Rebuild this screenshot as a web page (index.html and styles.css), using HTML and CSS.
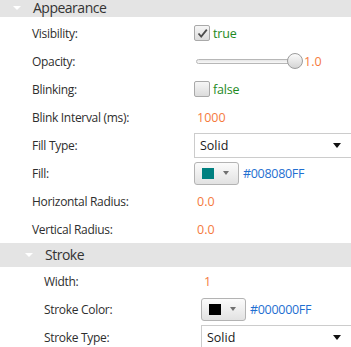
FILE: index.html
```html
<!DOCTYPE html>
<html>
<head>
<meta charset="utf-8">
<link rel="stylesheet" href="styles.css">
</head>
<body>
<div class="sheet">
  <div class="section">
    <div class="header top"><span class="tri"></span><span class="htext">Appearance</span></div>
    <div class="rows first">
      <div class="row">
        <div class="label">Visibility:</div>
        <div class="value">
          <span class="check on"><svg width="13" height="13" viewBox="0 0 13 13"><path d="M2.5 6.5 L5.2 9.6 L10.8 2.6" fill="none" stroke="#4d4d4d" stroke-width="1.8"/></svg></span>
          <span class="bool">true</span>
        </div>
      </div>
      <div class="row">
        <div class="label">Opacity:</div>
        <div class="value">
          <span class="slider"><span class="track"></span><span class="thumb"></span></span>
          <span class="num">1.0</span>
        </div>
      </div>
      <div class="row">
        <div class="label">Blinking:</div>
        <div class="value">
          <span class="check"></span>
          <span class="bool">false</span>
        </div>
      </div>
      <div class="row">
        <div class="label">Blink Interval (ms):</div>
        <div class="value"><span class="num pad">1000</span></div>
      </div>
      <div class="row">
        <div class="label">Fill Type:</div>
        <div class="value"><span class="select"><span>Solid</span><span class="darr"></span></span></div>
      </div>
      <div class="row">
        <div class="label">Fill:</div>
        <div class="value">
          <span class="colorbtn"><span class="swatch teal"></span><span class="garr"></span></span>
          <span class="hex">#008080FF</span>
        </div>
      </div>
      <div class="row">
        <div class="label">Horizontal Radius:</div>
        <div class="value"><span class="num pad">0.0</span></div>
      </div>
      <div class="row">
        <div class="label">Vertical Radius:</div>
        <div class="value"><span class="num pad">0.0</span></div>
      </div>
    </div>
  </div>
  <div class="section nested">
    <div class="header"><span class="tri"></span><span class="htext">Stroke</span></div>
    <div class="rows">
      <div class="row">
        <div class="label">Width:</div>
        <div class="value"><span class="num pad">1</span></div>
      </div>
      <div class="row">
        <div class="label">Stroke Color:</div>
        <div class="value">
          <span class="colorbtn"><span class="swatch black"></span><span class="garr"></span></span>
          <span class="hex">#000000FF</span>
        </div>
      </div>
      <div class="row">
        <div class="label">Stroke Type:</div>
        <div class="value"><span class="select"><span>Solid</span><span class="darr"></span></span></div>
      </div>
    </div>
  </div>
</div>
</body>
</html>
```

FILE: styles.css
```css
html, body {
  margin: 0;
  padding: 0;
  background: #ffffff;
  overflow: hidden;
}
body {
  font-family: "Open Sans", "Noto Sans", sans-serif;
  font-size: 12px;
  color: #2e2e2e;
}
.sheet {
  width: 351px;
}
.header {
  height: 24px;
  background: #e4e4e4;
  display: flex;
  align-items: center;
  padding-left: 13px;
}
.header.top {
  box-sizing: border-box;
  height: 17px;
  padding-bottom: 2px;
}
.nested .header {
  padding-left: 25px;
}
.tri {
  width: 0;
  height: 0;
  border-left: 4px solid transparent;
  border-right: 4px solid transparent;
  border-top: 4px solid #ffffff;
  margin-right: 12px;
}
.htext {
  font-size: 14px;
  line-height: 14px;
  letter-spacing: -0.5px;
  color: #333333;
}
.rows.first {
  padding-top: 2px;
}
.row {
  height: 28px;
  display: grid;
  grid-template-columns: 162px 1fr;
  align-items: center;
  padding-left: 32px;
}
.nested .row {
  padding-left: 44px;
  grid-template-columns: 157px 1fr;
}
.label {
  letter-spacing: -0.3px;
}
.value {
  display: flex;
  align-items: center;
  white-space: nowrap;
}
.check {
  width: 14px;
  height: 14px;
  border: 1px solid #a9a9a9;
  border-radius: 2px;
  background: linear-gradient(#f6f6f6, #dcdcdc);
  display: flex;
  align-items: center;
  justify-content: center;
  margin-right: 3px;
}
.bool {
  color: #1e8a1e;
  font-size: 12.5px;
  letter-spacing: -0.2px;
}
.slider {
  position: relative;
  width: 108px;
  height: 16px;
  display: flex;
  align-items: center;
}
.track {
  margin-left: 2px;
  width: 100px;
  height: 3px;
  border: 1px solid #b7b7b7;
  border-radius: 3px;
  background: linear-gradient(#e6e6e6, #f8f8f8);
}
.thumb {
  position: absolute;
  left: 93px;
  top: 0;
  width: 14px;
  height: 14px;
  border: 1px solid #9c9c9c;
  border-radius: 50%;
  background: linear-gradient(#fbfbfb, #d4d4d4);
}
.num {
  color: #f57a3e;
  font-size: 12.5px;
}
.slider + .num {
  margin-left: 2px;
}
.num.pad {
  padding-left: 3px;
}
.select {
  box-sizing: border-box;
  width: 162px;
  height: 25px;
  border: 1px solid #cccccc;
  background: #ffffff;
  display: flex;
  align-items: center;
  justify-content: space-between;
  padding: 0 14px 0 5px;
  color: #1a1a1a;
  font-size: 12.5px;
}
.nested .select {
  width: 155px;
}
.darr {
  width: 0;
  height: 0;
  border-left: 4.5px solid transparent;
  border-right: 4.5px solid transparent;
  border-top: 5px solid #111111;
}
.colorbtn {
  box-sizing: border-box;
  width: 45px;
  height: 23px;
  border: 1px solid #b3b3b3;
  border-radius: 3px;
  background: linear-gradient(#fbfbfb, #e2e2e2);
  display: flex;
  align-items: center;
  padding-left: 7px;
}
.swatch {
  width: 12px;
  height: 11px;
}
.teal {
  background: #008080;
}
.black {
  background: #000000;
}
.garr {
  margin-left: 9px;
  width: 0;
  height: 0;
  border-left: 3.5px solid transparent;
  border-right: 3.5px solid transparent;
  border-top: 4px solid #707070;
}
.hex {
  color: #1f6fd1;
  margin-left: 4px;
  font-size: 12.5px;
  letter-spacing: -0.3px;
}
```
